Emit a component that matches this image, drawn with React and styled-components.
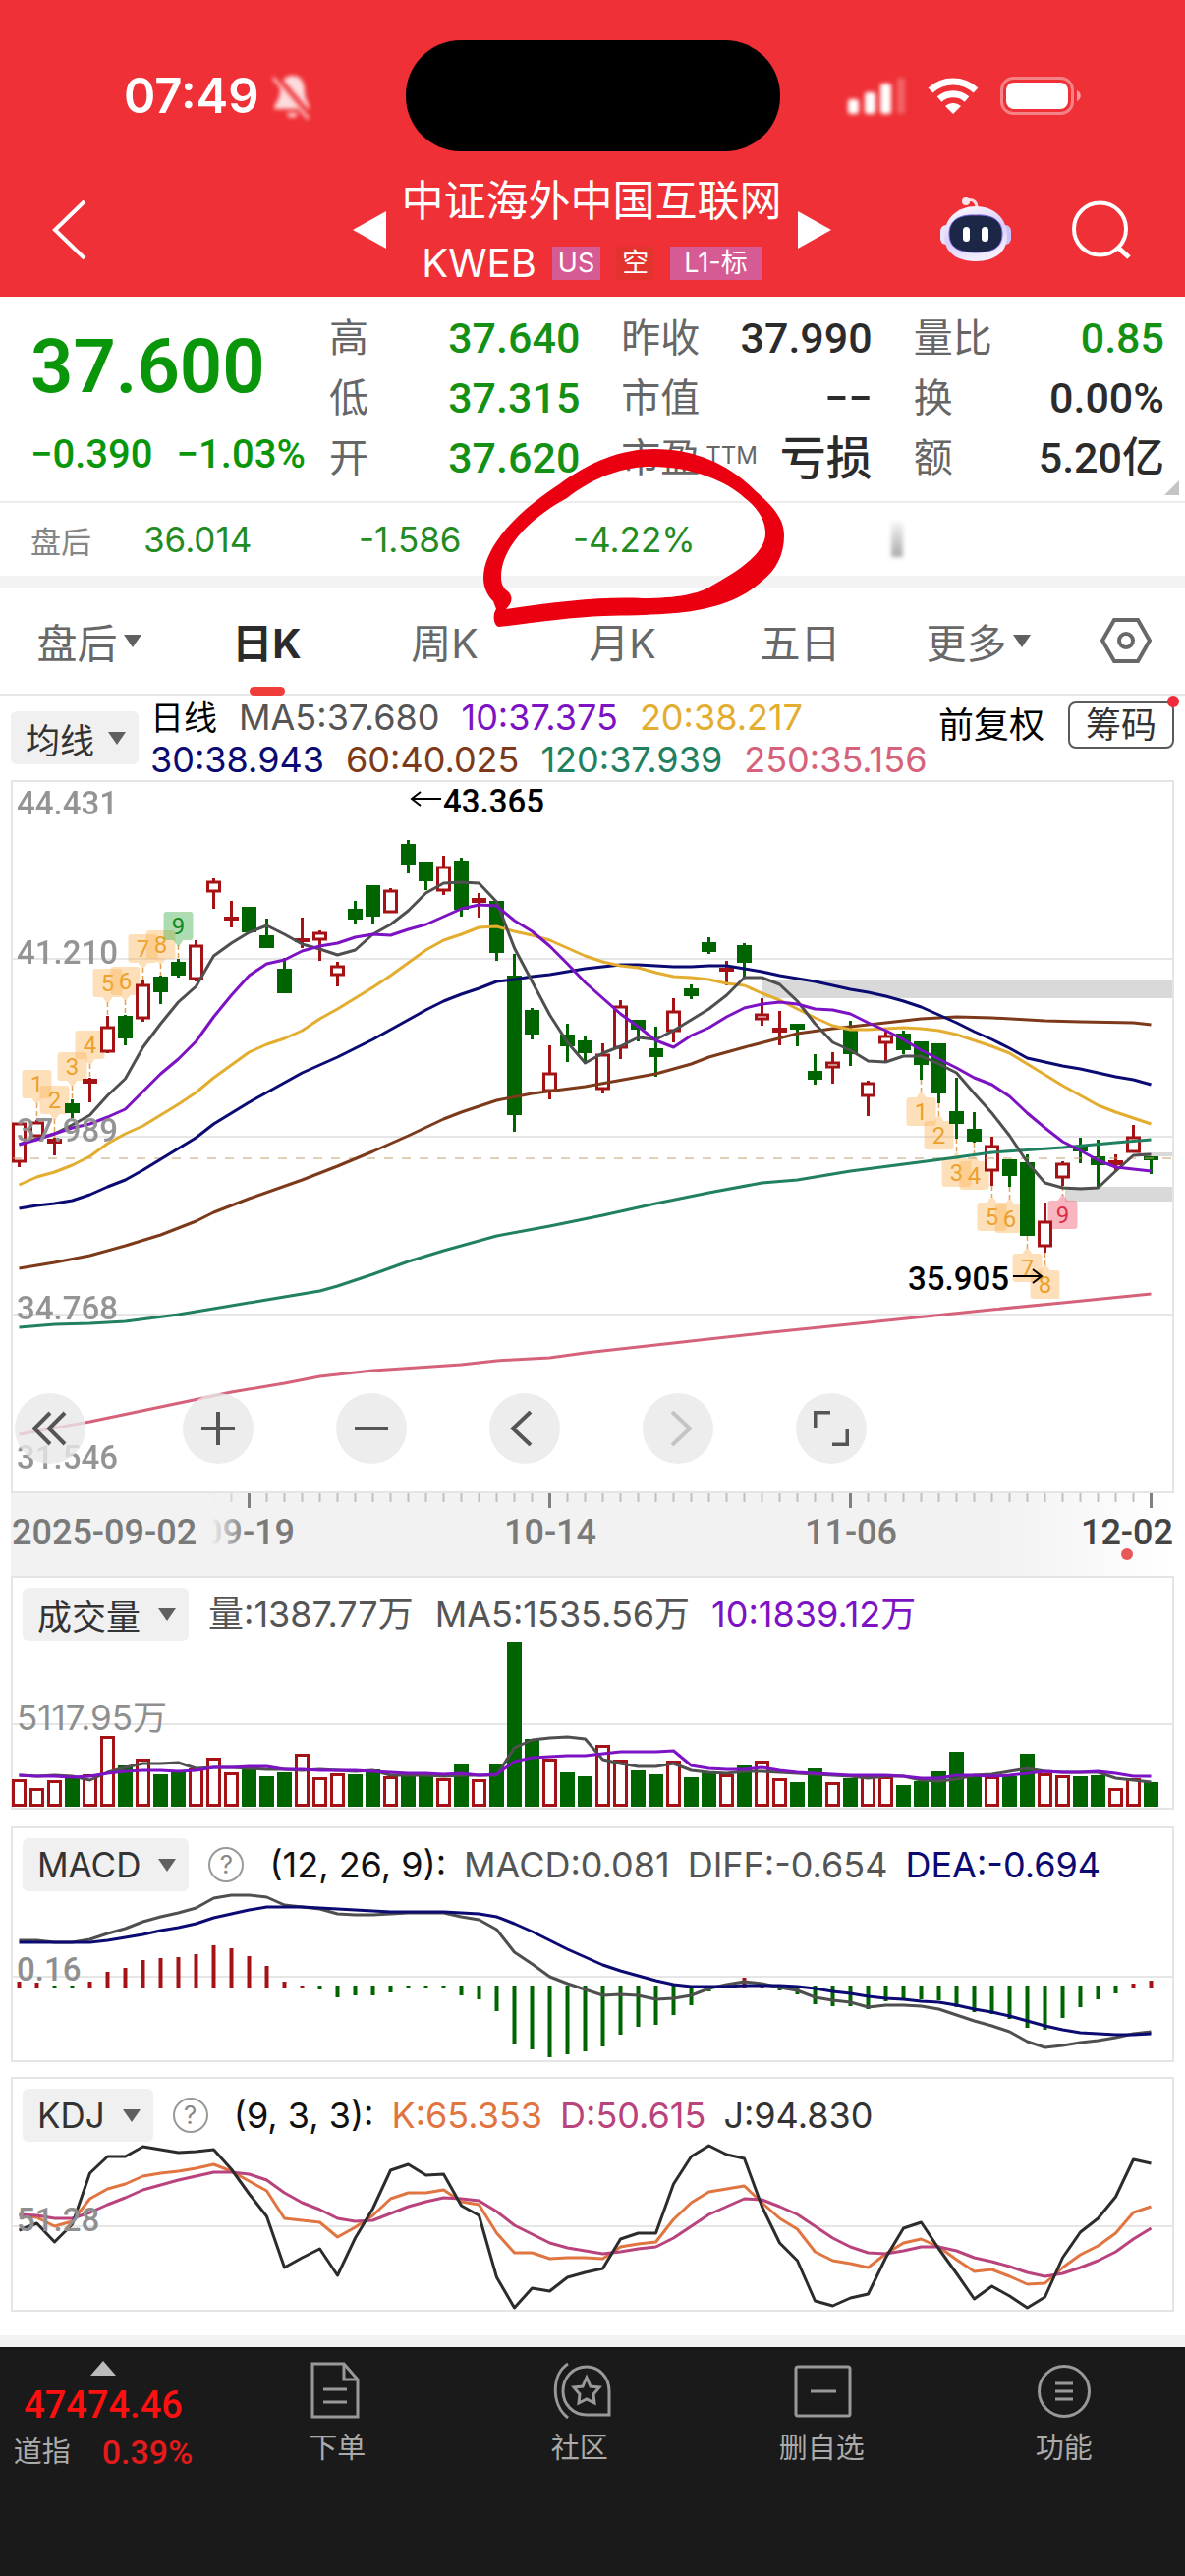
import React, { useState } from "react";
import styled, { createGlobalStyle, css } from "styled-components";

const GlobalStyle = createGlobalStyle`
  * {
    box-sizing: border-box;
  }
  body {
    margin: 0;
    background: #fff;
    font-family: Inter, "Noto Sans CJK SC", sans-serif;
  }
  button {
    border: 0;
    padding: 0;
    background: none;
    color: inherit;
    font: inherit;
    white-space: nowrap;
  }
  svg {
    display: block;
    flex: none;
  }
`;

const numberFont = css`
  font-family: Roboto, "Noto Sans CJK SC", sans-serif;
  font-weight: 500;
`;

const UP = "#a51215";
const DOWN = "#006400";
const GREY = "#4f4f4f";
const PURPLE = "#7d12c4";
const YELLOW = "#e3ad30";
const NAVY = "#0a0a72";
const BROWN = "#7c3a1a";
const TEAL = "#21805f";
const PINK = "#d5627a";

/* ---------- layout ---------- */

const Page = styled.div`
  display: flex;
  flex-direction: column;
  min-height: 100vh;
`;

const Header = styled.header`
  background: #ef3036;
  color: #fff;
  padding-top: 41px;
`;

const StatusBar = styled.div`
  display: grid;
  grid-template-columns: 1fr 381px 1fr;
  align-items: center;
  height: 113px;
`;

const Clock = styled.div`
  display: flex;
  align-items: center;
  gap: 12px;
  padding-left: 126px;
  font-size: 49px;
  font-weight: 600;
`;

const Island = styled.div`
  height: 113px;
  border-radius: 56px;
  background: #000;
`;

const StatusIcons = styled.div`
  display: flex;
  align-items: center;
  justify-content: flex-end;
  gap: 22px;
  padding-right: 105px;
`;

const NavBar = styled.nav`
  display: grid;
  grid-template-columns: 1fr auto 1fr;
  height: 148px;
  padding: 11px 55px 0 53px;
`;

const NavSide = styled.div`
  display: flex;
  align-items: center;
  justify-content: ${(p) => (p.$end ? "flex-end" : "flex-start")};
  gap: 62px;
`;

const NavTitle = styled.div`
  display: flex;
  align-items: center;
  gap: 16px;
`;

const TitleText = styled.div`
  display: flex;
  flex-direction: column;
  align-items: center;
  padding-top: 5px;
`;

const Title = styled.h1`
  margin: 0;
  font-size: 43px;
  font-weight: 400;
  line-height: 64px;
`;

const SubTitle = styled.div`
  display: flex;
  align-items: center;
  gap: 16px;
  font-size: 40px;
  line-height: 64px;
`;

const Tag = styled.span`
  padding: 0 ${(p) => (p.$wide ? "14px" : "6px")};
  background: ${(p) => p.$bg};
  font-size: 27px;
  line-height: 34px;
`;

const Quote = styled.section`
  position: relative;
`;

const QuoteGrid = styled.div`
  position: relative;
  display: grid;
  grid-template-columns: 335px 1fr;
  padding: 12px 21px 13px 0;
  border-bottom: 2px solid #ececec;
  ${numberFont}
`;

const PriceBox = styled.div`
  display: flex;
  flex-direction: column;
  padding-left: 31px;
  color: #0a960a;
`;

const Price = styled.div`
  font-size: 76px;
  font-weight: 600;
  line-height: 118px;
`;

const Change = styled.div`
  display: flex;
  gap: 24px;
  font-size: 40px;
  line-height: 61px;
`;

const Stats = styled.dl`
  display: grid;
  grid-template-columns: repeat(3, 1fr);
  column-gap: 42px;
  margin: 0;
`;

const Stat = styled.div`
  display: flex;
  justify-content: space-between;
  line-height: 61px;
  dt {
    color: #666;
    font-size: 40px;
    font-weight: 400;
  }
  dd {
    margin: 0;
    color: ${(p) => (p.$green ? "#149014" : "#2b2b2b")};
    font-size: ${(p) => (p.$text ? "47px" : "43px")};
  }
  sup {
    font-family: Inter, sans-serif;
    font-size: 24px;
    line-height: 0;
    vertical-align: 8px;
    margin-left: 6px;
  }
`;

const Corner = styled.span`
  position: absolute;
  right: 6px;
  bottom: 6px;
  border-left: 15px solid transparent;
  border-bottom: 15px solid #c4c4c4;
`;

const AfterHours = styled.div`
  display: grid;
  grid-template-columns: 115px 219px 218px 324px 1fr;
  align-items: center;
  height: 74px;
  padding-left: 31px;
  color: #228b22;
  font-size: 35px;
  small {
    color: #858585;
    font-size: 31px;
  }
`;

const Smudge = styled.i`
  width: 12px;
  height: 36px;
  background: linear-gradient(#f4f4f4, #aaa);
  filter: blur(2px);
`;

const Annotation = styled.svg`
  position: absolute;
  left: 40%;
  top: 150px;
`;

const Band = styled.div`
  height: 12px;
  background: #f3f3f3;
`;

const Tabs = styled.div`
  display: grid;
  grid-template-columns: repeat(6, 1fr) 120px;
  height: 110px;
  border-bottom: 2px solid #e6e6e6;
`;

const Tab = styled.button`
  display: flex;
  align-items: center;
  justify-content: center;
  gap: 6px;
  height: 108px;
  color: ${(p) => (p.$active ? "#2b2b2b" : "#686868")};
  font-size: 41px;
  font-weight: ${(p) => (p.$active ? 700 : 400)};
`;

const TabMark = styled.span`
  position: relative;
  &::after {
    content: "";
    position: absolute;
    left: 50%;
    bottom: -26px;
    width: 36px;
    height: 9px;
    margin-left: -18px;
    border-radius: 5px;
    background: #f03c3a;
  }
`;

const Main = styled.main`
  padding: 0 11px;
`;

const Legend = styled.div`
  display: flex;
  align-items: flex-start;
  height: 86px;
`;

const Chip = styled.button`
  display: flex;
  align-items: center;
  gap: 18px;
  height: 54px;
  padding: 0 13px 0 15px;
  border-radius: 6px;
  background: #f0f0f0;
  color: #333;
  font-size: 35px;
  ${(p) => p.$low && "gap: 14px; align-self: center;"}
`;

const LegendLines = styled.div`
  flex: 1;
  min-width: 0;
  padding: 1px 0 0 12px;
`;

const Values = styled.div`
  display: flex;
  gap: ${(p) => p.$gap || 18}px;
  font-size: 36px;
  line-height: 42px;
  white-space: nowrap;
`;

const Value = styled.span`
  color: ${(p) => p.$color};
`;

const Period = styled.span`
  font-size: 34px;
`;

const LegendRight = styled.div`
  display: flex;
  align-items: center;
  gap: 24px;
  padding-top: 6px;
  font-size: 36px;
  line-height: 44px;
`;

const ChipsButton = styled.button`
  position: relative;
  width: 108px;
  height: 48px;
  border: 2px solid #5a5a5a;
  border-radius: 8px;
  color: #333;
  &::after {
    content: "";
    position: absolute;
    top: -8px;
    right: -7px;
    width: 12px;
    height: 12px;
    border-radius: 50%;
    background: #ee2c3c;
  }
`;

const ChartBox = styled.section`
  position: relative;
  border: 2px solid #e5e5e5;
  margin-bottom: ${(p) => p.$after || 0}px;
`;

const Drawing = styled.svg`
  width: 100%;
  height: auto;
  overflow: visible;
`;

const PanelHead = styled.div`
  display: flex;
  align-items: center;
  gap: 20px;
  height: 64px;
  padding: 10px 10px 0;
`;

const Help = styled.button`
  width: 36px;
  height: 36px;
  margin-right: 6px;
  border: 2px solid #999;
  border-radius: 50%;
  color: #888;
  font-size: 26px;
  line-height: 32px;
`;

const AxisBar = styled.div`
  height: 84px;
  overflow: hidden;
  background: linear-gradient(90deg, #f2f2f2 85%, #fff);
`;

const ChartTools = styled.div`
  position: absolute;
  left: 2px;
  bottom: 28px;
  display: flex;
  gap: 84px;
`;

const ToolButton = styled.button`
  display: flex;
  align-items: center;
  justify-content: center;
  width: 72px;
  height: 72px;
  border-radius: 50%;
  background: rgba(232, 232, 232, 0.8);
  color: ${(p) => (p.disabled ? "#c4c4c4" : "#555")};
  &:first-child {
    margin-right: 15px;
  }
`;

const Footer = styled.footer`
  flex: 1;
  display: grid;
  grid-template-columns: 220px repeat(4, 1fr);
  min-height: 233px;
  padding-top: 14px;
  background: #1a1a1a;
  color: #aaa;
`;

const IndexBox = styled.button`
  display: flex;
  flex-direction: column;
  align-items: center;
  align-self: start;
  padding-right: 10px;
  ${numberFont}
  strong {
    color: #ff1010;
    font-size: 38px;
    font-weight: 500;
    line-height: 60px;
  }
`;

const IndexRow = styled.span`
  display: flex;
  align-items: center;
  gap: 32px;
  font-size: 29px;
  font-weight: 400;
  line-height: 36px;
  em {
    color: #e51a1a;
    font-size: 34px;
    font-style: normal;
    font-weight: 500;
  }
`;

const FooterItem = styled.button`
  display: flex;
  flex-direction: column;
  align-items: center;
  align-self: start;
  gap: 8px;
  font-size: 29px;
  line-height: 42px;
`;

/* ---------- data ---------- */

const stats = [
  { label: "高", value: "37.640", green: true },
  { label: "昨收", value: "37.990" },
  { label: "量比", value: "0.85", green: true },
  { label: "低", value: "37.315", green: true },
  { label: "市值", value: "−−" },
  { label: "换", value: "0.00%" },
  { label: "开", value: "37.620", green: true },
  { label: "市盈", sup: "TTM", value: "亏损", text: true },
  { label: "额", value: "5.20亿" },
];

const tabs = [
  { label: "盘后", menu: true },
  { label: "日K" },
  { label: "周K" },
  { label: "月K" },
  { label: "五日" },
  { label: "更多", menu: true },
];

// rising flag, high, body top, body bottom, low
const candles = [
  [1, 348, 348, 388, 393], [1, 345, 347, 362, 362], [1, 363, 364, 369, 381],
  [0, 324, 328, 338, 343], [1, 302, 303, 308, 327], [1, 239, 250, 276, 277],
  [0, 238, 239, 262, 269], [1, 203, 207, 242, 245], [0, 198, 199, 215, 227],
  [0, 181, 184, 198, 200], [1, 162, 167, 202, 204], [1, 99, 102, 113, 130],
  [1, 122, 138, 142, 149], [0, 128, 128, 154, 154], [0, 140, 157, 170, 170],
  [0, 180, 191, 216, 216], [1, 139, 160, 164, 170], [1, 152, 154, 162, 183],
  [1, 184, 188, 198, 209], [0, 122, 130, 141, 146], [0, 106, 106, 138, 146],
  [1, 109, 111, 134, 134], [0, 60, 64, 85, 94], [0, 82, 82, 102, 111],
  [1, 76, 87, 112, 116], [0, 78, 81, 131, 138], [1, 114, 119, 124, 139],
  [0, 122, 122, 175, 183], [0, 176, 198, 340, 357], [0, 231, 233, 258, 263],
  [1, 269, 297, 316, 324], [0, 247, 258, 270, 286], [0, 259, 264, 277, 288],
  [1, 267, 278, 314, 318], [1, 223, 229, 272, 283], [0, 243, 243, 253, 265],
  [0, 250, 272, 281, 301], [1, 221, 234, 255, 266], [0, 207, 211, 219, 222],
  [0, 159, 164, 174, 176], [1, 183, 190, 194, 208], [0, 165, 167, 185, 201],
  [1, 221, 237, 243, 249], [1, 234, 251, 256, 269], [0, 247, 247, 253, 270],
  [0, 278, 295, 304, 309], [1, 276, 286, 292, 308], [0, 244, 253, 278, 290],
  [1, 305, 307, 321, 341], [1, 255, 259, 267, 287], [0, 254, 257, 274, 278],
  [0, 265, 265, 289, 304], [0, 267, 267, 318, 328], [0, 302, 336, 349, 364],
  [0, 337, 354, 367, 368], [1, 362, 371, 397, 412], [0, 385, 385, 402, 413],
  [0, 380, 388, 463, 463], [1, 429, 448, 474, 480], [1, 387, 389, 404, 412],
  [0, 363, 371, 377, 389], [0, 365, 382, 391, 414], [1, 380, 386, 391, 397],
  [1, 350, 362, 378, 378], [0, 382, 382, 386, 400],
];

const ma5 = [370, 364, 359, 350, 340, 320, 303, 271, 247, 225, 209, 178, 165, 154, 147, 156, 166, 171, 177, 172, 156, 146, 132, 114, 104, 103, 104, 123, 170, 204, 238, 266, 287, 277, 270, 261, 263, 254, 243, 232, 218, 200, 200, 207, 224, 247, 266, 274, 285, 286, 280, 280, 288, 297, 318, 338, 361, 388, 409, 414, 415, 414, 397, 381, 380];
const ma10 = [370, 365, 359, 353, 349, 342, 334, 316, 298, 283, 265, 240, 218, 198, 186, 182, 173, 168, 165, 159, 156, 157, 151, 146, 138, 130, 126, 127, 142, 153, 168, 186, 205, 221, 237, 250, 264, 271, 259, 251, 240, 231, 227, 225, 227, 232, 233, 237, 246, 254, 263, 274, 283, 292, 302, 309, 321, 338, 353, 367, 376, 386, 393, 395, 397];
const ma20 = [411, 403, 398, 391, 382, 369, 359, 351, 340, 329, 317, 302, 289, 276, 268, 262, 254, 242, 232, 221, 210, 198, 185, 172, 162, 156, 149, 148, 153, 157, 162, 170, 178, 184, 188, 190, 195, 199, 200, 202, 206, 208, 216, 223, 232, 241, 249, 253, 253, 252, 251, 252, 254, 258, 264, 270, 277, 288, 299, 310, 320, 330, 337, 343, 349];
const ma30 = [435, 432, 430, 427, 421, 413, 406, 396, 385, 374, 363, 349, 338, 327, 317, 307, 297, 289, 281, 272, 263, 253, 243, 233, 224, 217, 211, 204, 202, 199, 197, 194, 191, 189, 187, 187, 188, 189, 189, 188, 188, 191, 194, 198, 201, 204, 208, 212, 215, 219, 224, 230, 238, 246, 255, 263, 272, 282, 286, 290, 293, 297, 301, 304, 309];

// long averages move slowly, so they are kept as [day, y] pairs
const ma60 = [[0, 496], [2, 490], [4, 483], [6, 473], [8, 462], [10, 448], [11, 439], [13, 425], [16, 406], [18, 392], [20, 377], [22, 361], [24, 344], [25, 337], [27, 325], [29, 318], [32, 311], [36, 298], [38, 288], [39, 281], [41, 271], [44, 257], [46, 252], [48, 248], [51, 242], [53, 240], [55, 241], [58, 244], [60, 245], [63, 246], [64, 248]];
const ma120 = [[0, 556], [2, 553], [4, 552], [6, 550], [9, 543], [11, 537], [14, 528], [17, 519], [18, 514], [20, 502], [22, 489], [24, 478], [27, 463], [30, 453], [33, 442], [36, 430], [39, 419], [42, 409], [44, 406], [47, 397], [50, 390], [53, 383], [55, 378], [59, 373], [62, 368], [64, 365]];
const ma250 = [[0, 665], [4, 652], [8, 637], [12, 622], [15, 613], [17, 606], [20, 600], [25, 594], [27, 590], [30, 587], [32, 582], [42, 562], [48, 551], [55, 538], [59, 531], [64, 522]];

const marks = [
  [1, 1, 294], [2, 2, 310], [3, 3, 276], [4, 4, 254], [5, 5, 191],
  [6, 6, 189], [7, 7, 156], [8, 8, 152], [9, 9, 133],
  [51, 1, 322, true], [52, 2, 346, true], [53, 3, 384, true],
  [54, 4, 387, true], [55, 5, 429, true], [56, 6, 431, true],
  [57, 7, 481, true], [58, 8, 498, true], [59, 9, 427, true],
];

const volumes = [28, 19, 27, 29, 33, 72, 42, 49, 33, 35, 39, 50, 35, 39, 31, 35, 54, 30, 34, 33, 38, 31, 31, 31, 29, 43, 28, 43, 168, 69, 49, 35, 31, 63, 48, 37, 33, 47, 30, 35, 33, 42, 47, 29, 25, 39, 25, 29, 31, 31, 22, 26, 36, 56, 33, 31, 31, 54, 34, 32, 31, 32, 19, 29, 25];
const vol5 = [201, 202, 201, 202, 206, 198, 193, 189, 189, 188, 194, 193, 193, 194, 195, 195, 196, 195, 196, 197, 196, 201, 201, 201, 202, 201, 201, 201, 173, 165, 163, 162, 164, 185, 189, 192, 192, 189, 196, 198, 199, 197, 197, 198, 199, 200, 201, 202, 204, 202, 202, 206, 207, 205, 201, 200, 197, 194, 197, 198, 198, 198, 204, 206, 208];
const vol10 = [201, 202, 202, 203, 202, 199, 197, 196, 196, 197, 196, 193, 193, 192, 192, 195, 195, 196, 196, 196, 197, 198, 199, 199, 200, 199, 201, 200, 187, 183, 182, 181, 181, 179, 177, 177, 177, 176, 191, 194, 195, 195, 193, 196, 198, 199, 200, 201, 201, 201, 202, 204, 204, 201, 201, 202, 201, 199, 197, 198, 198, 197, 199, 202, 202];

const macd = [5, 4, -2, -1, 5, 15, 19, 27, 29, 30, 33, 42, 39, 31, 21, 5, 1, -3, -11, -9, -9, -6, -1, -1, -1, -9, -13, -25, -59, -64, -72, -69, -66, -61, -49, -41, -39, -29, -19, -5, -1, 9, 4, -4, -8, -18, -20, -20, -23, -15, -13, -13, -14, -21, -26, -28, -33, -42, -44, -32, -21, -13, -7, 3, 6];
const diff = [114, 114, 116, 116, 113, 107, 102, 95, 90, 86, 81, 71, 68, 68, 70, 78, 80, 82, 87, 88, 88, 87, 86, 86, 86, 90, 93, 103, 126, 138, 151, 158, 164, 170, 169, 170, 174, 173, 170, 163, 159, 156, 158, 162, 165, 172, 175, 177, 182, 180, 180, 181, 184, 190, 196, 201, 207, 217, 223, 221, 218, 216, 213, 209, 207];
const dea = [116, 116, 116, 116, 116, 114, 111, 108, 104, 101, 97, 91, 87, 83, 80, 80, 80, 81, 82, 83, 84, 85, 85, 85, 85, 86, 87, 90, 97, 105, 114, 123, 131, 139, 145, 150, 155, 159, 161, 161, 161, 160, 160, 160, 161, 163, 166, 168, 171, 173, 174, 176, 177, 180, 184, 187, 191, 196, 201, 205, 208, 209, 210, 210, 209];

const kLine = [139, 141, 150, 145, 122, 112, 107, 99, 96, 94, 91, 87, 94, 104, 114, 142, 144, 146, 161, 151, 139, 122, 116, 116, 113, 125, 128, 157, 177, 177, 183, 182, 182, 183, 171, 168, 166, 143, 126, 115, 112, 109, 126, 142, 153, 176, 185, 188, 192, 178, 167, 163, 171, 184, 196, 194, 201, 209, 208, 192, 179, 170, 157, 136, 130];
const dLine = [138, 139, 142, 142, 136, 128, 121, 113, 108, 103, 99, 95, 95, 97, 103, 116, 126, 133, 142, 145, 144, 137, 130, 125, 121, 122, 124, 135, 149, 158, 167, 172, 175, 178, 176, 173, 171, 162, 150, 138, 130, 122, 123, 130, 138, 150, 162, 171, 177, 178, 175, 171, 171, 175, 182, 186, 191, 197, 201, 198, 192, 185, 176, 163, 152];
const jLine = [154, 147, 166, 148, 96, 79, 79, 69, 72, 75, 74, 72, 92, 117, 140, 192, 182, 173, 200, 162, 132, 93, 87, 98, 97, 129, 139, 202, 233, 213, 216, 202, 197, 193, 163, 157, 157, 107, 79, 68, 77, 81, 130, 167, 185, 226, 231, 223, 219, 182, 152, 146, 173, 198, 224, 211, 221, 233, 222, 182, 156, 142, 120, 82, 86];

const dayX = (i) => 7.5 + i * 18;

/* ---------- chart parts ---------- */

const Line = ({ data, color, width = 3 }) => (
  <polyline
    points={data
      .map((v, i) => (Array.isArray(v) ? `${dayX(v[0])},${v[1]}` : `${dayX(i)},${v}`))
      .join(" ")}
    fill="none"
    stroke={color}
    strokeWidth={width}
    strokeLinejoin="round"
  />
);

const Grid = ({ y }) => <path d={`M1 ${y}H1181`} stroke="#e6e6e6" strokeWidth="2" />;

const AxisText = ({ y, children, family = "Roboto", size = 33 }) => (
  <text x="5" y={y} fill="#8f8f8f" fontSize={size} fontFamily={`${family}, "Noto Sans CJK SC", sans-serif`} fontWeight={family === "Roboto" ? 500 : 400}>
    {children}
  </text>
);

const Candle = ({ i, data }) => {
  const [up, high, top, bottom, low] = data;
  const x = dayX(i);
  const color = up ? UP : DOWN;
  const hollow = up && bottom - top > 5;
  return (
    <g stroke={color} strokeWidth="3">
      <path d={`M${x} ${high}V${top}M${x} ${bottom}V${low}`} />
      {hollow ? (
        <rect x={x - 6} y={top + 1} width="12" height={bottom - top - 2} fill="#fff" />
      ) : (
        <rect x={x - 7.5} y={top} width="15" height={bottom - top} fill={color} stroke="none" />
      )}
    </g>
  );
};

const Mark = ({ data }) => {
  const [i, num, y, below] = data;
  const x = dayX(i);
  const bg = num < 9 ? "#fbb65c" : below ? "#f0566b" : "#3fae4a";
  const fg = num < 9 ? "#eda02b" : below ? "#dc2d45" : "#128a1c";
  return (
    <g>
      <path
        d={below ? `M${x} ${candles[i][4]}V${y - 5}` : `M${x} ${y + 34}V${candles[i][1]}`}
        stroke="#e0a258"
        strokeWidth="1.5"
        strokeDasharray="5 3"
      />
      <g fill={bg} opacity="0.42">
        <rect x={x - 15} y={y} width="30" height="29" rx="3" />
        <path d={below ? `M${x - 5} ${y}L${x} ${y - 7}L${x + 5} ${y}Z` : `M${x - 5} ${y + 29}L${x} ${y + 36}L${x + 5} ${y + 29}Z`} />
      </g>
      <text x={x} y={y + 23} fill={fg} fontSize="24" fontFamily="Roboto, sans-serif" textAnchor="middle">
        {num}
      </text>
    </g>
  );
};

const PriceChart = () => (
  <Drawing viewBox="1 1 1180 722" role="img" aria-label="日K">
    <Grid y={181} />
    <Grid y={362} />
    <Grid y={543} />
    <path d="M764 202H1181V221H764ZM1072 413H1181V428H1072ZM1145 378H1181V382H1145Z" fill="#d9d9d9" />
    {marks.map((m) => <Mark key={m[0]} data={m} />)}
    {candles.map((c, i) => <Candle key={i} i={i} data={c} />)}
    <path d="M1 384H1181" stroke="#c09f6a" strokeWidth="1" strokeDasharray="9 9" />
    <Line data={ma250} color={PINK} />
    <Line data={ma120} color={TEAL} />
    <Line data={ma60} color={BROWN} />
    <Line data={ma30} color={NAVY} />
    <Line data={ma20} color={YELLOW} />
    <Line data={ma5} color={GREY} />
    <Line data={ma10} color={PURPLE} />
    <g opacity="0.95">
      <AxisText y={34}>44.431</AxisText>
      <AxisText y={186}>41.210</AxisText>
      <AxisText y={367}>37.989</AxisText>
      <AxisText y={548}>34.768</AxisText>
      <AxisText y={700}>31.546</AxisText>
    </g>
    <g fontSize="33" fontWeight="500" fontFamily="Roboto, sans-serif">
      <text x="439" y="32">43.365</text>
      <text x="1015" y="518" textAnchor="end">35.905</text>
    </g>
    <path d="M437 18H407M416 11L407 18L416 25M1019 504H1048M1039 497L1048 504L1039 511" fill="none" stroke="#000" strokeWidth="2" />
  </Drawing>
);

const TimeAxis = () => (
  <Drawing viewBox="0 0 1184 84" role="img" aria-label="时间">
    <defs>
      <linearGradient id="axisFade">
        <stop offset="0.6" stopColor="#f2f2f2" />
        <stop offset="1" stopColor="#f2f2f2" stopOpacity="0" />
      </linearGradient>
    </defs>
    {candles.map((_, i) => {
      if (i < 11) return null;
      const major = i % 17 === 13;
      return (
        <path
          key={i}
          d={`M${dayX(i) + 1} 0V${major ? 15 : 9}`}
          stroke={major ? "#808080" : "#c0c0c0"}
          strokeWidth={major ? 3 : 2}
        />
      );
    })}
    <g fill="#7a7a7a" fontSize="36" fontWeight="500" fontFamily="Roboto, sans-serif">
      <text x="242" y="52" textAnchor="middle">09-19</text>
      <rect x="150" y="0" width="90" height="84" fill="url(#axisFade)" />
      <text x="1" y="52">2025-09-02</text>
      <text x="549" y="52" textAnchor="middle">10-14</text>
      <text x="855" y="52" textAnchor="middle">11-06</text>
      <text x="1183" y="52" textAnchor="end" fill="#444">12-02</text>
    </g>
    <circle cx="1136" cy="62" r="6" fill="#e85858" />
  </Drawing>
);

const VolumeChart = () => (
  <Drawing viewBox="1 64 1180 170" role="img" aria-label="成交量">
    <Grid y={149} />
    {volumes.map((h, i) =>
      candles[i][0] ? (
        <rect key={i} x={dayX(i) - 6} y={234.5 - h} width="12" height={h - 3} fill="#fff" stroke={UP} strokeWidth="3" />
      ) : (
        <rect key={i} x={dayX(i) - 7.5} y={233 - h} width="15" height={h} fill={DOWN} />
      )
    )}
    <Line data={vol5} color={GREY} />
    <Line data={vol10} color={PURPLE} />
    <AxisText y={155} family="Inter" size={35}>5117.95万</AxisText>
  </Drawing>
);

const MacdChart = () => (
  <Drawing viewBox="1 64 1180 172" role="img" aria-label="MACD">
    <Grid y={151} />
    {macd.map((v, i) => (
      <path key={i} d={`M${dayX(i)} ${v > 0 ? 162 : 160}V${161 - v}`} stroke={v > 0 ? UP : DOWN} strokeWidth="4" />
    ))}
    <Line data={diff} color={GREY} />
    <Line data={dea} color={NAVY} />
    <AxisText y={155}>0.16</AxisText>
  </Drawing>
);

const KdjChart = () => (
  <Drawing viewBox="1 64 1180 171" role="img" aria-label="KDJ">
    <Grid y={150} />
    <Line data={kLine} color="#e17542" />
    <Line data={dLine} color="#b9437c" />
    <Line data={jLine} color="#2c2c2c" />
    <AxisText y={155}>51.28</AxisText>
  </Drawing>
);

/* ---------- icons ---------- */

const Caret = ({ size = 18 }) => (
  <svg width={size} height="14" viewBox="0 0 18 14" fill="#606060"><path d="M0 1H18L9 14Z" /></svg>
);

const BellOff = () => (
  <svg width="44" height="50" viewBox="0 0 44 50" style={{ filter: "blur(2px)" }}>
    <path d="M22 4C12 4 9 12 9 20C9 30 3 32 3 38H39C39 32 34 30 34 20C34 12 31 4 22 4ZM16 42H27C26 48 17 48 16 42Z" fill="#fddcdd" />
    <path d="M5 4L41 46" stroke="#ef3036" strokeWidth="5" />
    <path d="M2 6L38 48" stroke="#fcc9cb" strokeWidth="3" />
  </svg>
);

const Signal = () => (
  <svg width="60" height="40" viewBox="0 0 60 40" fill="#fff" style={{ filter: "blur(2px)" }}>
    <rect x="1" y="23" width="11" height="15" rx="3" />
    <rect x="18" y="16" width="11" height="22" rx="3" />
    <rect x="34" y="7" width="11" height="31" rx="3" />
    <rect x="51" y="1" width="8" height="37" rx="3" opacity="0.25" />
  </svg>
);

const Wifi = () => (
  <svg width="52" height="38" viewBox="0 0 52 38" fill="none" stroke="#fff" strokeWidth="7">
    <path d="M3 13C16 1 36 1 49 13" />
    <path d="M12 22C20 15 32 15 40 22" />
    <path d="M18 29C23 25 29 25 34 29L26 37Z" fill="#fff" stroke="none" />
  </svg>
);

const Battery = () => (
  <svg width="83" height="40" viewBox="0 0 83 40">
    <rect x="1.5" y="1.5" width="72" height="36" rx="12" fill="none" stroke="#fff" strokeOpacity="0.4" strokeWidth="3" />
    <rect x="6" y="6" width="63" height="27" rx="8" fill="#fff" />
    <path d="M78 14C83 16 83 23 78 25Z" fill="#fff" fillOpacity="0.5" />
  </svg>
);

const Robot = () => (
  <svg width="72" height="67" viewBox="0 0 72 67">
    <defs>
      <linearGradient id="shell" x2="0.4" y2="1">
        <stop offset="0" stopColor="#fff" />
        <stop offset="0.6" stopColor="#d9cdfa" />
        <stop offset="1" stopColor="#f3eeff" />
      </linearGradient>
    </defs>
    <path d="M26 4C34 2 37 6 37 12" fill="none" stroke="#fbd9e2" strokeWidth="3" />
    <circle cx="26" cy="5" r="4" fill="#fbe3ea" />
    <rect x="0" y="29" width="12" height="20" rx="6" fill="#e9e2fc" />
    <rect x="60" y="29" width="12" height="20" rx="6" fill="#c9c3f7" />
    <path d="M36 10C54 10 68 22 68 40C68 58 54 66 36 66C18 66 4 58 4 40C4 22 18 10 36 10Z" fill="url(#shell)" />
    <path d="M36 19C55 18 63 26 63 38C63 51 55 57 36 57C17 57 9 51 9 38C9 26 17 18 36 19Z" fill="#1c2748" stroke="#7b62d6" strokeWidth="1" />
    <rect x="23" y="31" width="7" height="15" rx="3.5" fill="#fff" />
    <rect x="42" y="31" width="7" height="15" rx="3.5" fill="#fff" />
  </svg>
);

const Search = () => (
  <svg width="60" height="60" viewBox="0 0 60 60" fill="none" stroke="#fff" strokeWidth="4">
    <circle cx="28.5" cy="29" r="26.5" />
    <path d="M47 48L58 58" strokeWidth="5" />
  </svg>
);

const toolIcons = {
  收起: <path d="M18 2L2 18L18 34M33 2L17 18L33 34" />,
  放大: <path d="M18 1V35M1 18H35" />,
  缩小: <path d="M1 18H35" />,
  左移: <path d="M24 1L6 18L24 35" />,
  右移: <path d="M12 1L30 18L12 35" />,
  全屏: <path d="M1 17V1H17M35 19V35H19" strokeWidth="5" />,
};

const footerItems = [
  {
    label: "下单",
    icon: (
      <>
        <path d="M5 3H37L51 19V57H5V3Z" />
        <path d="M37 3V19H51M16 29H40M16 42H40" />
      </>
    ),
  },
  {
    label: "社区",
    icon: (
      <>
        <path d="M60 55H37C23 55 13 44 13 31C13 17 23 6 37 6C50 6 60 17 60 31Z" />
        <path d="M18 3C1 14 1 45 18 58" />
        <path d="M37 17L41 26L50 27L44 34L45 43L37 39L29 43L30 34L24 27L33 26Z" />
      </>
    ),
  },
  {
    label: "删自选",
    icon: (
      <>
        <rect x="4" y="6" width="55" height="50" rx="2" />
        <path d="M19 31H45" />
      </>
    ),
  },
  {
    label: "功能",
    icon: (
      <>
        <circle cx="30" cy="31" r="25.5" />
        <path d="M21 23H39M21 31H39M21 39H39" />
      </>
    ),
  },
];

const Indicator = ({ name, params, values, after, gap, children }) => (
  <ChartBox $after={after}>
    <PanelHead>
      <Chip>
        {name}
        <Caret />
      </Chip>
      {params && <Help aria-label={`${name}说明`}>?</Help>}
      <Values $gap={gap}>
        {params && <Value $color="#111">{params}</Value>}
        {values.map(([text, color]) => (
          <Value key={text} $color={color}>{text}</Value>
        ))}
      </Values>
    </PanelHead>
    {children}
  </ChartBox>
);

const App = () => {
  const [activeTab, setActiveTab] = useState("日K");

  return (
    <Page>
      <GlobalStyle />
      <Header>
        <StatusBar>
          <Clock>07:49<BellOff /></Clock>
          <Island />
          <StatusIcons>
            <Signal />
            <Wifi />
            <Battery />
          </StatusIcons>
        </StatusBar>
        <NavBar>
          <NavSide>
            <button aria-label="返回">
              <svg width="36" height="60" viewBox="0 0 36 60" fill="none" stroke="#fff" strokeWidth="4">
                <path d="M33 1L3 30L33 59" />
              </svg>
            </button>
          </NavSide>
          <NavTitle>
            <button aria-label="上一个">
              <svg width="34" height="38" viewBox="0 0 34 38" fill="#fff"><path d="M34 0V38L0 19Z" /></svg>
            </button>
            <TitleText>
              <Title>中证海外中国互联网</Title>
              <SubTitle>
                KWEB
                <Tag $bg="#d65a93">US</Tag>
                <Tag $bg="#e2332f">空</Tag>
                <Tag $bg="#d65a93" $wide>L1-标</Tag>
              </SubTitle>
            </TitleText>
            <button aria-label="下一个">
              <svg width="34" height="38" viewBox="0 0 34 38" fill="#fff"><path d="M0 0V38L34 19Z" /></svg>
            </button>
          </NavTitle>
          <NavSide $end>
            <button aria-label="助手"><Robot /></button>
            <button aria-label="搜索"><Search /></button>
          </NavSide>
        </NavBar>
      </Header>

      <Quote>
        <QuoteGrid>
          <PriceBox>
            <Price>37.600</Price>
            <Change>
              <span>−0.390</span>
              <span>−1.03%</span>
            </Change>
          </PriceBox>
          <Stats>
            {stats.map((s) => (
              <Stat key={s.label} $green={s.green} $text={s.text}>
                <dt>{s.label}{s.sup && <sup>{s.sup}</sup>}</dt>
                <dd>{s.value}</dd>
              </Stat>
            ))}
          </Stats>
          <Corner />
        </QuoteGrid>
        <AfterHours>
          <small>盘后</small>
          <span>36.014</span>
          <span>-1.586</span>
          <span>-4.22%</span>
          <Smudge />
        </AfterHours>
        <Annotation width="320" height="192" viewBox="482 452 320 192">
          <path
            fill="#eb0012"
            fillRule="evenodd"
            d="M505 620L502 612C496 606 492 598 492 588C492 560 520 525 569 493C600 470 632 457 666 457C710 457 745 475 769 500C790 518 798 530 798 545C798 565 790 580 775 592C760 605 745 613 723 618C700 625 660 626 615 627C585 628 550 633 508 638C502 637 501 625 505 620ZM515 620C523 612 521 606 517 602C511 598 510 592 510 587C510 560 535 530 577 507C605 485 635 475 663 475C705 475 740 490 758 507C772 518 779 530 779 543C779 565 745 585 723 597C712 604 690 609 654 609C615 607 570 612 515 620Z"
          />
        </Annotation>
      </Quote>

      <Band />
      <Tabs role="tablist">
        {tabs.map((t) => (
          <Tab key={t.label} role="tab" $active={t.label === activeTab} onClick={() => setActiveTab(t.label)}>
            {t.label === activeTab ? <TabMark>{t.label}</TabMark> : t.label}
            {t.menu && <Caret />}
          </Tab>
        ))}
        <Tab aria-label="设置">
          <svg width="52" height="48" viewBox="0 0 52 48" fill="none" stroke="#686868" strokeWidth="4">
            <path d="M14 3H38L50 24L38 45H14L2 24Z" />
            <circle cx="26" cy="24" r="7" />
          </svg>
        </Tab>
      </Tabs>

      <Main>
        <Legend>
          <Chip $low>
            均线
            <Caret />
          </Chip>
          <LegendLines>
            <Values $gap={22}>
              <Value $color="#000"><Period>日线</Period></Value>
              <Value $color="#555">MA5:37.680</Value>
              <Value $color={PURPLE}>10:37.375</Value>
              <Value $color={YELLOW}>20:38.217</Value>
            </Values>
            <Values $gap={22}>
              <Value $color={NAVY}>30:38.943</Value>
              <Value $color={BROWN}>60:40.025</Value>
              <Value $color={TEAL}>120:37.939</Value>
              <Value $color={PINK}>250:35.156</Value>
            </Values>
          </LegendLines>
          <LegendRight>
            前复权
            <ChipsButton>筹码</ChipsButton>
          </LegendRight>
        </Legend>

        <ChartBox>
          <PriceChart />
          <ChartTools>
            {Object.keys(toolIcons).map((name) => (
              <ToolButton key={name} aria-label={name} disabled={name === "右移"}>
                <svg width="36" height="36" viewBox="0 0 36 36" fill="none" stroke="currentColor" strokeWidth="4">
                  {toolIcons[name]}
                </svg>
              </ToolButton>
            ))}
          </ChartTools>
        </ChartBox>
        <AxisBar>
          <TimeAxis />
        </AxisBar>

        <Indicator
          name="成交量"
          after={17}
          gap={22}
          values={[["量:1387.77万", "#555"], ["MA5:1535.56万", "#555"], ["10:1839.12万", PURPLE]]}
        >
          <VolumeChart />
        </Indicator>
        <Indicator
          name="MACD"
          after={15}
          params="(12, 26, 9):"
          values={[["MACD:0.081", "#555"], ["DIFF:-0.654", "#555"], ["DEA:-0.694", NAVY]]}
        >
          <MacdChart />
        </Indicator>
        <Indicator
          name="KDJ"
          after={24}
          params="(9, 3, 3):"
          values={[["K:65.353", "#e17542"], ["D:50.615", "#b9437c"], ["J:94.830", "#333"]]}
        >
          <KdjChart />
        </Indicator>
      </Main>

      <Band />
      <Footer>
        <IndexBox>
          <svg width="26" height="15" viewBox="0 0 26 15" fill="#bbb"><path d="M13 0L26 15H0Z" /></svg>
          <strong>47474.46</strong>
          <IndexRow>道指<em>0.39%</em></IndexRow>
        </IndexBox>
        {footerItems.map((item) => (
          <FooterItem key={item.label}>
            <svg width="60" height="60" viewBox="0 0 60 60" overflow="visible" fill="none" stroke="#999" strokeWidth="3">
              {item.icon}
            </svg>
            {item.label}
          </FooterItem>
        ))}
      </Footer>
    </Page>
  );
};

export default App;
